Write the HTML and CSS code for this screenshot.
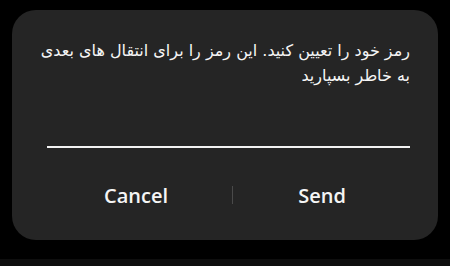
FILE: index.html
```html
<!DOCTYPE html>
<html lang="fa">
<head>
<meta charset="utf-8">
<link rel="stylesheet" href="styles.css">
</head>
<body>
<div class="screen">
  <div class="dialog">
    <p class="message" dir="rtl">رمز خود را تعیین کنید. این رمز را برای انتقال های بعدی به خاطر بسپارید</p>
    <div class="field"></div>
    <div class="actions">
      <button class="btn">Cancel</button>
      <span class="divider"></span>
      <button class="btn">Send</button>
    </div>
  </div>
  <div class="navbar"></div>
</div>
</body>
</html>
```
FILE: styles.css
```css
html, body {
  margin: 0;
  padding: 0;
  background: #000;
}
.screen {
  width: 450px;
  height: 266px;
  display: flex;
  flex-direction: column;
  background: #000;
  overflow: hidden;
}
.dialog {
  margin: 10px 12px 0 12px;
  height: 230px;
  box-sizing: border-box;
  background: #252525;
  border-radius: 24px;
  padding: 28px 28px 0 35px;
  display: flex;
  flex-direction: column;
}
.message {
  margin: 0 0 0 -12px;
  font-family: "DejaVu Sans", "Noto Sans", sans-serif;
  font-size: 16px;
  line-height: 25px;
  color: #f5f5f5;
  text-align: right;
}
.field {
  margin-top: 58px;
  height: 2px;
  background: #f2f2f2;
}
.actions {
  margin-top: 27px;
  margin-left: -7px;
  display: grid;
  grid-template-columns: 192px 1px 178px;
  align-items: center;
  height: 40px;
}
.btn {
  background: none;
  border: 0;
  padding: 0;
  font-family: "Open Sans", "Noto Sans", sans-serif;
  font-weight: 600;
  font-size: 20px;
  color: #f5f5f5;
  text-align: center;
}
.divider {
  width: 1px;
  height: 18px;
  background: #4a4a4a;
}
.navbar {
  margin-top: 19px;
  height: 7px;
  background: #0e0e0e;
}
```
